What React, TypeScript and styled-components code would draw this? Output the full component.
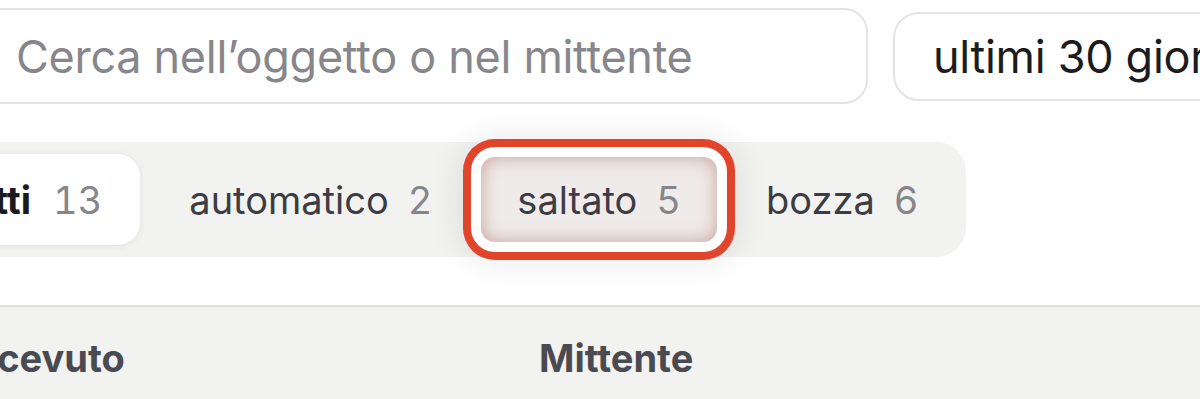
import React from "react";
import styled, { createGlobalStyle } from "styled-components";

const Global = createGlobalStyle`
  html, body { margin: 0; padding: 0; background: #ffffff; overflow: hidden; }
  body { font-family: Inter, "Noto Sans", sans-serif; width: 1200px; height: 399px; }
`;

const Content = styled.div`
  margin-left: -100px;
  width: 1400px;
  display: flex;
  flex-direction: column;
`;

const SearchRow = styled.div`
  display: flex;
  align-items: center;
  gap: 25px;
  padding: 8px 0 0 70px;
`;

const SearchBox = styled.div`
  box-sizing: border-box;
  width: 898px;
  height: 96px;
  border: 2px solid #e4e3e1;
  border-radius: 24px;
  display: flex;
  align-items: center;
  padding-left: 44px;
  font-size: 45px;
  color: #86868b;
  letter-spacing: -0.3px;
  white-space: nowrap;
`;

const Select = styled.div`
  box-sizing: border-box;
  width: 400px;
  height: 89px;
  border: 2px solid #e4e3e1;
  border-radius: 26px;
  display: flex;
  align-items: center;
  padding-left: 38px;
  font-size: 45px;
  letter-spacing: -0.3px;
  color: #1c1c20;
  white-space: nowrap;
`;

const TabBar = styled.div`
  margin-top: 38px;
  align-self: flex-start;
  display: flex;
  align-items: center;
  gap: 13px;
  padding: 12px;
  background: #f2f2f1;
  border-radius: 30px;
`;

const Tab = styled.div<{ $active?: boolean; $marked?: boolean }>`
  box-sizing: border-box;
  height: ${(p) => (p.$marked ? "85px" : "91px")};
  display: flex;
  align-items: center;
  gap: ${(p) => (p.$active ? "22px" : "19px")};
  padding: ${(p) => (p.$active ? "0 38px 0 36px" : "0 36px")};
  border-radius: ${(p) => (p.$marked ? "14px" : "22px")};
  font-size: 38px;
  white-space: nowrap;
  background: ${(p) => (p.$active ? "#ffffff" : p.$marked ? "#efebea" : "transparent")};
  box-shadow: ${(p) =>
    p.$active
      ? "0 1px 6px rgba(0,0,0,0.08)"
      : p.$marked
      ? "inset 0 0 18px rgba(150,70,60,0.45), 0 0 0 10px #ffffff, 0 0 0 18px #e0452b, 0 0 34px 18px rgba(0,0,0,0.10)"
      : "none"};
`;

const Label = styled.span<{ $active?: boolean }>`
  color: ${(p) => (p.$active ? "#1b1b1f" : "#3c3c44")};
  font-weight: ${(p) => (p.$active ? 700 : 400)};
`;

const Count = styled.span`
  color: #86868a;
  font-variant-numeric: tabular-nums;
`;

const HeaderRow = styled.div`
  margin-top: 48px;
  border-top: 2px solid #e0dfdd;
  background: #f2f2f0;
  height: 120px;
  display: grid;
  grid-template-columns: 577px 1fr;
  align-items: start;
  padding-top: 28px;
  box-sizing: border-box;
  padding-left: 62px;
`;

const HeaderCell = styled.div`
  font-family: Inter, "Liberation Sans", Arial, sans-serif;
  font-weight: 700;
  font-size: 38px;
  color: #4a4a51;
`;

const tabs = [
  { label: "Tutti", count: 13, active: true },
  { label: "automatico", count: 2 },
  { label: "saltato", count: 5, marked: true },
  { label: "bozza", count: 6 },
];

export default function App() {
  return (
    <>
      <Global />
      <Content>
        <SearchRow>
          <SearchBox>Cerca nell’oggetto o nel mittente</SearchBox>
          <Select>ultimi 30 giorni</Select>
        </SearchRow>
        <TabBar>
          {tabs.map((t) => (
            <Tab key={t.label} $active={t.active} $marked={t.marked}>
              <Label $active={t.active}>{t.label}</Label>
              <Count>{t.count}</Count>
            </Tab>
          ))}
        </TabBar>
        <HeaderRow>
          <HeaderCell>Ricevuto</HeaderCell>
          <HeaderCell>Mittente</HeaderCell>
        </HeaderRow>
      </Content>
    </>
  );
}
